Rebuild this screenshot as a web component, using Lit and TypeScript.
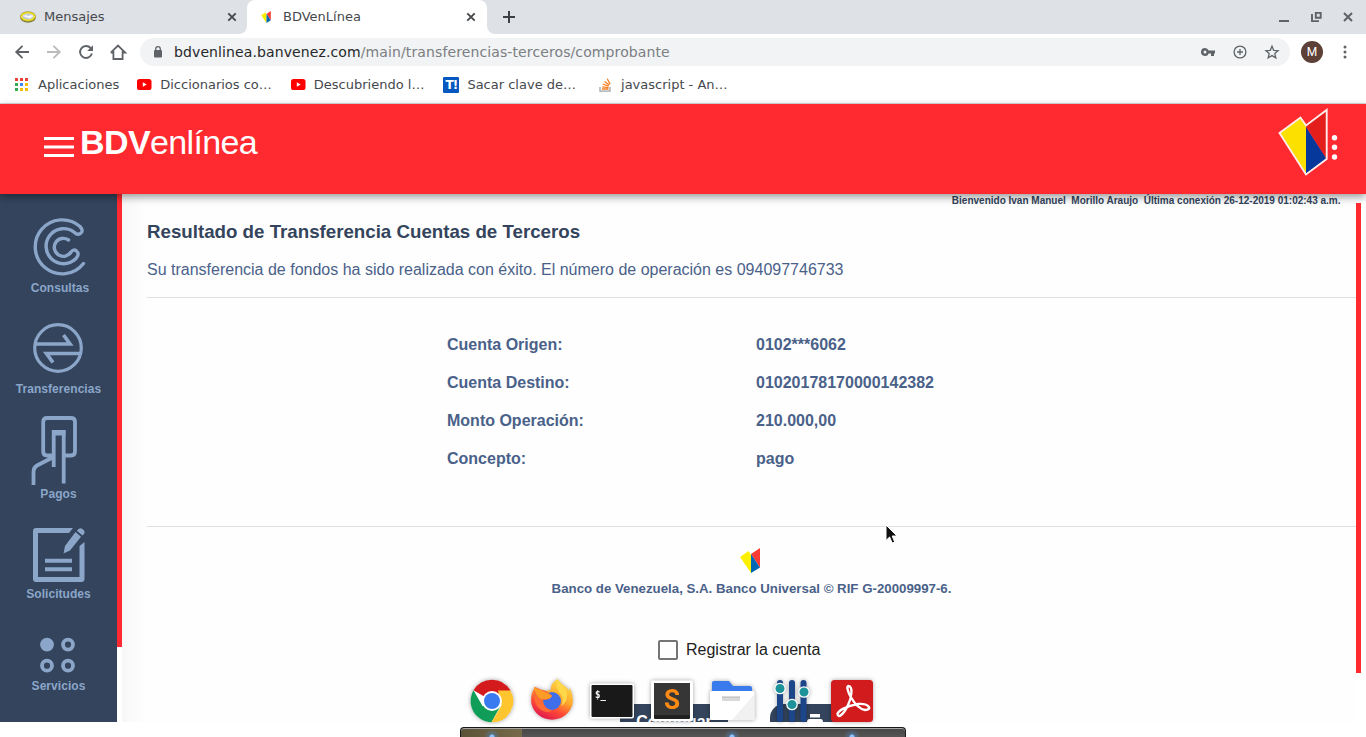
import { LitElement, html, css, svg, SVGTemplateResult } from "lit";
import { customElement } from "lit/decorators.js";

const icon = (cls: string, box: string, body: SVGTemplateResult) => {
  const [, , w, h] = box.split(" ");
  return html`<svg class="ic ${cls}" width=${w} height=${h} viewBox=${box} aria-hidden="true">${body}</svg>`;
};

const cross = svg`<path d="M1.3 1.3L8.7 8.7M8.7 1.3L1.3 8.7" stroke="#45494d" stroke-width="1.900" fill="none"/>`;

const bankMark = svg`
  <path d="M0 9L8.500 3L11 7V25Z" fill="#fff000"/>
  <path d="M11 6L20 0V19.500Z" fill="#ff3b35"/>
  <path d="M11 6L20 19.500L11 25Z" fill="#0067b5"/>`;

const youtube = svg`<rect x="0" y="0" width="14.500" height="11" rx="2.600" fill="#f00"/><path d="M5.800 3.300L9.700 5.500L5.800 7.700Z" fill="#fff"/>`;

@customElement("browser-chrome")
export class BrowserChrome extends LitElement {
  static styles = css`
    :host { display: block; height: 104px; font: 13px/17px "DejaVu Sans", sans-serif; color: #45494d; background: #fff; }
    .ic { display: block; flex: none; overflow: visible; }
    .tabs { display: flex; height: 34px; align-items: stretch; background: #fff; }
    .tab { box-sizing: border-box; display: flex; align-items: center; }
    .idle { width: 247px; padding-left: 20px; background: #dee1e6; border-bottom-right-radius: 8px; }
    .mount { width: 240px; background: linear-gradient(#dee1e6 12px, #fff 12px); }
    .active { width: 240px; height: 34px; padding-left: 14px; background: #fff; border-radius: 8px 8px 0 0; }
    .rest { flex: 1; display: flex; align-items: center; background: #dee1e6; border-bottom-left-radius: 8px; padding-left: 16px; padding-right: 13px; }
    .name { flex: 1; height: 17px; margin-top: -1px; }
    .idle .name { padding-left: 8px; }
    .active .name { padding-left: 12px; }
    .idle .x { margin-right: 10px; }
    .active .x { margin-right: 11px; }
    .min { margin-left: auto; }
    .max { margin-left: 22px; }
    .cls { margin-left: 21px; }
    .bar { display: flex; height: 36px; align-items: center; padding-left: 15px; }
    .fwd { margin-left: 18px; }
    .rel { margin-left: 18px; }
    .home { margin-left: 17px; }
    .omni { margin-left: 14px; display: flex; align-items: center; width: 1150px; height: 28px; border-radius: 14px; background: #f1f3f4; box-sizing: border-box; padding: 0 11px 0 14px; }
    .url { flex: 1; margin-left: 12px; font-size: 14px; color: #7b7e82; letter-spacing: 0.11px; }
    .host { color: #26282b; }
    .key { margin-right: 18px; }
    .zoom { margin-right: 18px; }
    .me { width: 22px; height: 22px; border-radius: 50%; background: #5d4037; color: #fff; font: 12px/22px "Roboto", sans-serif; text-align: center; margin-left: 11px; }
    .more { margin-left: 20px; }
    .marks { display: flex; height: 33px; align-items: center; padding: 0 0 4px 15px; box-sizing: border-box; }
    .apps { margin-right: 10px; }
    .yt { margin: 0 8px 0 18px; }
    .yt2 { margin: 0 8px 0 19px; }
    .t { width: 16px; height: 16px; margin: 0 8px 0 19px; background: #0558c0; border-radius: 1px; color: #fff; font: bold 12px/16px "DejaVu Sans", sans-serif; text-align: center; letter-spacing: -1px; }
    .so { margin: 0 9px 0 23px; }
    .edge { height: 1px; background: #d9dadc; }
  `;

  render() {
    return html`
      <div class="tabs">
        <div class="tab idle">
          ${icon("", "0 0 16 12", svg`<ellipse cx="8" cy="7" rx="7.700" ry="4.700" fill="#7d7b42"/><ellipse cx="8" cy="5.500" rx="7.600" ry="4.800" fill="#f4e51d" stroke="#96913c" stroke-width=".7"/><ellipse cx="8" cy="5.500" rx="5.700" ry="3" fill="#c3cad9"/><path d="M2.500 5L6 4L8 5L11 4L13.500 5L10 7.500L7 6.500Z" fill="#f7f7fa"/>`)}
          <span class="name">Mensajes</span>${icon("x", "0 0 10 10", cross)}
        </div>
        <div class="mount"><div class="tab active">
          ${html`<svg class="ic" width="10" height="12" viewBox="0 0 20 25">${bankMark}</svg>`}
          <span class="name">BDVenLínea</span>${icon("x", "0 0 10 10", cross)}
        </div></div>
        <div class="rest">
          ${icon("", "0 0 12 12", svg`<path d="M6 0V12M0 6H12" stroke="#3c4043" stroke-width="2"/>`)}
          ${icon("min", "0 0 10 10", svg`<path d="M0 9H10" stroke="#5f6368" stroke-width="2"/>`)}
          ${icon("max", "0 0 11 10", svg`<path d="M4.800 .9H9.700V5.800H4.800Z" fill="none" stroke="#5f6368" stroke-width="1.900"/><path d="M1 2V9.100H8" fill="none" stroke="#5f6368" stroke-width="1.900"/>`)}
          ${icon("cls", "0 0 10 10", svg`<path d="M1 1L9 9M9 1L1 9" stroke="#5f6368" stroke-width="2"/>`)}
        </div>
      </div>
      <div class="bar">
        ${icon("", "0 0 14 14", svg`<path d="M14 7H1.500M7.500 .8L1.300 7L7.500 13.200" fill="none" stroke="#5f6368" stroke-width="1.900"/>`)}
        ${icon("fwd", "0 0 14 14", svg`<path d="M0 7H12.500M6.500 .8L12.700 7L6.500 13.200" fill="none" stroke="#babcbe" stroke-width="1.900"/>`)}
        ${icon("rel", "0 0 14 14", svg`<path d="M11.600 3A6 6 0 1 0 12.900 8.500" fill="none" stroke="#5f6368" stroke-width="1.900"/><path d="M14 .2V6H8.200Z" fill="#5f6368"/>`)}
        ${icon("home", "0 0 16 16", svg`<path d="M3.400 7V15H12.600V7M.8 8.600L8 1.500L15.200 8.600H12.600M.8 8.600H3.400" fill="none" stroke="#5f6368" stroke-width="1.800"/>`)}
        <div class="omni">
          ${icon("", "0 0 8 12", svg`<rect y="4" width="8" height="7.500" rx="1" fill="#5f6368"/><path d="M1.700 5V3A2.300 2.300 0 0 1 6.300 3V5" fill="none" stroke="#5f6368" stroke-width="1.300"/>`)}
          <span class="url"><span class="host">bdvenlinea.banvenez.com</span>/main/transferencias-terceros/comprobante</span>
          ${icon("key", "0 0 14 10", svg`<path fill-rule="evenodd" d="M4 1A4 4 0 1 0 7.700 6.500H10V9H13V6.500H14V3.500H7.700A4 4 0 0 0 4 1ZM4 3.500A1.500 1.500 0 1 1 4 6.500A1.500 1.500 0 1 1 4 3.500Z" fill="#5f6368"/>`)}
          ${icon("zoom", "0 0 14 14", svg`<circle cx="7" cy="7" r="5.900" fill="none" stroke="#5f6368" stroke-width="1.300"/><path d="M7 4V10M4 7H10" stroke="#5f6368" stroke-width="1.300"/>`)}
          ${icon("", "0 0 14 14", svg`<path d="M7 1.200L8.700 5.300L13.100 5.700L9.800 8.600L10.800 12.900L7 10.600L3.200 12.900L4.200 8.600L.9 5.700L5.300 5.300Z" fill="none" stroke="#5f6368" stroke-width="1.300"/>`)}
        </div>
        <div class="me">M</div>
        ${icon("more", "0 0 4 14", svg`<g fill="#5f6368"><circle cx="2" cy="2" r="1.500"/><circle cx="2" cy="7" r="1.500"/><circle cx="2" cy="12" r="1.500"/></g>`)}
      </div>
      <div class="marks">
        ${icon("apps", "0 0 13 13", svg`<g fill="#ea4335"><path d="M0 0h3v3H0zM5 0h3v3H5zM10 0h3v3h-3z"/></g><g fill="#34a853"><path d="M0 5h3v3H0zM0 10h3v3H0z"/></g><path fill="#4285f4" d="M5 5h3v3H5z"/><path fill="#fbbc05" d="M10 5h3v3h-3zM5 10h3v3H5zM10 10h3v3h-3z"/>`)}
        <span>Aplicaciones</span>${icon("yt", "0 0 15 11", youtube)}
        <span>Diccionarios co…</span>${icon("yt2", "0 0 15 11", youtube)}
        <span>Descubriendo l…</span><span class="t">T!</span>
        <span>Sacar clave de…</span>
        ${icon("so", "0 0 13 14", svg`<path d="M1 9V13.200H11V9" fill="none" stroke="#a2a5a9" stroke-width="1.300"/><path d="M3 11H9.500M3.200 8.800L9.500 9.600M3.700 6L9.700 8.100M5.500 3.500L10.300 7.100M8.200 .8L11.200 6.100" stroke="#f48024" stroke-width="1.300"/>`)}
        <span>javascript - An…</span>
      </div>
      <div class="edge"></div>`;
  }
}

@customElement("side-menu")
export class SideMenu extends LitElement {
  static styles = css`
    :host { display: block; background: #33445c; color: #8ba6c9; height: 528px; font: bold 12px/14px "Liberation Sans", Arial, sans-serif; letter-spacing: 0.05px; }
    .menu { display: flex; flex-direction: column; align-items: center; padding-top: 24px; }
    .item { display: flex; flex-direction: column; align-items: center; width: 117px; }
    .ic { display: block; overflow: visible; }
    .cons { padding-left: 3px; box-sizing: border-box; }
    .cons .ic { margin-right: 2px; }
    .cons span { margin-top: 6px; }
    .tran { margin-top: 28px; }
    .tran .ic { margin-right: 1px; }
    .tran span { margin-top: 9px; }
    .pago { margin-top: 20px; }
    .pago .ic { margin-right: 9px; }
    .pago span { margin-top: 2px; }
    .soli { margin-top: 27px; }
    .soli span { margin-top: 5px; }
    .serv { margin-top: 36px; }
    .serv .ic { margin-right: 2px; }
    .serv span { margin-top: 6px; }
  `;

  render() {
    const c = "#8ba6c9";
    return html`<div class="menu">
      <div class="item cons">
        ${icon("", "33 218 52 57", svg`<path d="M83.500 263.500A27 27 0 1 1 80 226.500Q84 231 80.500 233.300Q77.500 235.500 74.500 232.500A17.500 17.500 0 1 0 75.500 259Q80.500 254 76 250.500Q73.500 249 71 252A9 9 0 1 1 68.500 240" fill="none" stroke=${c} stroke-width="3.400" stroke-linecap="round"/>`)}
        <span>Consultas</span></div>
      <div class="item tran">
        ${icon("", "33 323 50 50", svg`<circle cx="58" cy="348" r="23.300" fill="none" stroke=${c} stroke-width="3.200"/><path d="M36 344H70L63.500 335M80 353.500H46.500L53 362.500" fill="none" stroke=${c} stroke-width="3.700"/>`)}
        <span>Transferencias</span></div>
      <div class="item pago">
        ${icon("", "31 416 46 69", svg`<path d="M53 455.500H47Q43.200 455.500 43.200 451.500V422Q43.200 418 47.200 418H71Q75 418 75 422V451.500Q75 455.500 71 455.500H65.500M53.700 467V432H63.700V483.500M53.500 457L37 465.500Q33.500 467.500 33.500 472V485" fill="none" stroke=${c} stroke-width="3.800"/><path d="M52 430H65.500V435.500H52Z" fill=${c}/>`)}
        <span>Pagos</span></div>
      <div class="item soli">
        ${icon("", "33 528 52 54", svg`<path d="M73 528L69 533H38V577H79.500V546L84.500 542V579Q84.500 582 81.500 582H36Q33 582 33 579V531Q33 528 36 528Z" fill=${c}/><path d="M45 560.800H72M45 569.200H72" stroke=${c} stroke-width="4"/><path d="M75.500 532L81 536.800L70 550.500L63.500 553.500L65 546Z" fill=${c}/><path d="M77.500 530Q80 527 83 529.500Q86 532 83.500 534.500L82.500 535.500L76.800 530.800Z" fill=${c}/>`)}
        <span>Solicitudes</span></div>
      <div class="item serv">
        ${icon("", "40 637 36 36", svg`<circle cx="47" cy="644.600" r="6.900" fill=${c}/><g fill="none" stroke=${c} stroke-width="3.800"><circle cx="68" cy="644.600" r="5"/><circle cx="47" cy="665.700" r="5"/><circle cx="68" cy="665.700" r="5"/></g>`)}
        <span>Servicios</span></div>
    </div>`;
  }
}

@customElement("task-dock")
export class TaskDock extends LitElement {
  static styles = css`
    :host { display: block; width: 446px; }
    .apps { display: flex; gap: 16px; padding-left: 10px; height: 48px; align-items: flex-start; }
    .ic { display: block; overflow: visible; filter: drop-shadow(0 0 2px rgba(0, 0, 0, 0.35)); }
    .tray { box-sizing: border-box; height: 10px; border: 1px solid #19191a; border-bottom: 0; border-radius: 4px 4px 0 0; box-shadow: inset 0 1px #a6a6a6; background: radial-gradient(circle at 31px 9px, #8bc5ff 0 2px, #4f80b488 3px, transparent 8px), radial-gradient(circle at 271px 9px, #8bc5ff 0 2px, #4f80b488 3px, transparent 8px), radial-gradient(circle at 391px 9px, #8bc5ff 0 2px, #4f80b488 3px, transparent 8px), linear-gradient(90deg, #5a5238 0, #766a49 61px, transparent 61px), linear-gradient(#464646, #555); }
    .mono { font: bold 10px "DejaVu Sans Mono", monospace; }
    .ess { font: bold 28px "Roboto", sans-serif; }
  `;

  render() {
    return html`
      <div class="apps">
        ${icon("", "470 679 44 44", svg`<circle cx="492" cy="701" r="21.300" fill="#fff"/><path d="M492 701L473.500 690.300A21.300 21.300 0 0 1 510.500 690.500Z" fill="#d51a1e"/><path d="M473.500 690.300A21.300 21.300 0 0 0 491.500 722.300L500.500 706L482.500 706Z" fill="#0f9d58"/><path d="M510.500 690.500A21.300 21.300 0 0 1 491.500 722.300L501.500 705.500L498 690.500Z" fill="#ffc52e"/><circle cx="492" cy="701" r="10" fill="#fff"/><circle cx="492" cy="701" r="8" fill="#397af0"/>`)}
        ${icon("", "530 679 44 44", svg`<defs><linearGradient id="fx" x1=".8" y1="0" x2=".3" y2="1"><stop stop-color="#ffe34b"/><stop offset=".45" stop-color="#ffa52b"/><stop offset=".7" stop-color="#ff4d35"/><stop offset="1" stop-color="#df1650"/></linearGradient></defs><path d="M557.500 679Q561 684 566 687L569 690.500L570 688Q574 697 572.500 704A21 20 0 0 1 531.500 704Q530 694 535 687L537 690Q542 689 546 691L551 690Q550 684 557.500 679Z" fill="url(#fx)"/><circle cx="552" cy="701" r="9" fill="#3f6fe8"/><path d="M535 687Q541 690 546 691L552 695.500Q550 700 543 700Q543 708 552 710.500Q548 714 541 710Q534 705 534 695Z" fill="#ff6a35"/><path d="M557.500 680Q555 688 560 693Q565 699 561 706Q568 702 567 693Q566 688 562 685Z" fill="#ffd84a"/><path d="M534 687Q543 691 547 693L552 696Q550 700 541 699Q536 697 534 687Z" fill="#ff9b27"/>`)}
        ${icon("", "590 679 44 44", svg`<rect x="590" y="683.500" width="44" height="35" rx="2" fill="#fff"/><rect x="591.500" y="685" width="41" height="32" rx="1" fill="#191919"/><text class="mono" x="595" y="697.500" textLength="11" lengthAdjust="spacingAndGlyphs" fill="#f5f5f5">$_</text>`)}
        ${icon("", "650 679 44 44", svg`<rect x="651" y="680.500" width="42" height="41" rx="2" fill="#fff"/><rect x="654" y="683" width="36" height="36" rx="1" fill="#202020"/><rect x="654" y="683" width="36" height="32" fill="#363636"/><text class="ess" x="672" y="709" text-anchor="middle" textLength="16" lengthAdjust="spacingAndGlyphs" fill="#ff8b14">S</text>`)}
        ${icon("", "710 679 44 44", svg`<path d="M712 693V683Q712 681 714 681H729L733 686H750Q752 686 752 688V693Z" fill="#397bed"/><rect x="710" y="691" width="44.500" height="29" rx="2" fill="#fff"/><path d="M754.500 694V718Q754.500 720 752.500 720H732Z" fill="#f1f1f1"/><rect x="722" y="697" width="18" height="4" fill="#d9d9d9"/><path d="M722 697H740" stroke="#b5b5b5"/>`)}
        ${icon("", "770 679 44 44", svg`<g stroke="#1c458a" stroke-width="6" stroke-linecap="round"><path d="M780 683V719M792 683V719M803.500 683V719"/></g><g fill="#1d9298" stroke="#fff" stroke-width="1.300"><circle cx="780" cy="688.500" r="5.200"/><circle cx="792" cy="704.500" r="5.200"/><circle cx="804" cy="692" r="5.200"/></g>`)}
        ${icon("", "830 679 44 44", svg`<rect x="831" y="680" width="42" height="42" rx="3.500" fill="#d21b1d"/><path d="M848.500 686C844 686 854 708 865 710C873 710 869 703 858 704C846 706 838 711 837.500 714C838 719 844 714 848 705C852 697 853 686 848.500 686Z" fill="none" stroke="#fff" stroke-width="2.400" stroke-linejoin="round"/>`)}
      </div>
      <div class="tray"></div>`;
  }
}

@customElement("app-root")
export class AppRoot extends LitElement {
  static styles = css`
    :host { display: block; position: relative; width: 1366px; height: 737px; overflow: hidden; background: #fff; font-family: "Liberation Sans", Arial, sans-serif; }
    .ic { display: block; flex: none; overflow: visible; }
    .head { position: relative; z-index: 1; display: flex; box-sizing: border-box; height: 90px; background: #ff2a30; padding: 0 28px 0 44px; box-shadow: 0 3px 8px rgba(0, 0, 0, 0.4); color: #fff; }
    .burger { margin-top: 33px; }
    .brand { margin: 19px 0 0 6px; font-size: 34px; line-height: 39px; letter-spacing: -0.65px; white-space: nowrap; }
    .brand b { letter-spacing: -0.6px; }
    .logo { margin: 4px 0 0 auto; }
    .dots { margin: 31px 0 0 3px; }
    .body { display: grid; grid-template-columns: 117px 5px 1234px 5px; height: 528px; overflow: hidden; }
    .strip { height: 453px; background: #ff2a30; }
    .rail { height: 470px; margin-top: 9px; background: #ff2a30; }
    .main { box-sizing: border-box; height: 528px; overflow: hidden; padding-left: 25px; color: #4a6189; background: linear-gradient(90deg, #f7f7f7, #fcfcfc 14px, #fefefe 28px); }
    .welcome { font: bold 10px/13px "Liberation Sans", Arial, sans-serif; color: #33445c; text-align: right; padding-right: 15.5px; white-space: pre; }
    .title { font-size: 18.72px; line-height: 24px; margin: 13px 0 0; color: #33445c; }
    .msg { font-size: 16px; line-height: 20px; margin: 16px 0 17px; }
    .rule { height: 1px; background: #dedfe0; }
    .data { display: grid; grid-template-columns: 309px auto; grid-auto-rows: 38px; align-items: center; padding: 28px 0 48px 300px; font-size: 16px; font-weight: bold; }
    .foot { display: flex; flex-direction: column; align-items: center; padding-top: 21px; font: bold 13.28px/16px "Liberation Sans", Arial, sans-serif; }
    .foot span { margin-top: 8px; }
    .check { display: flex; align-items: center; gap: 8px; height: 20px; margin: 43px 0 0 511px; color: #212121; font-size: 16px; }
    .box { box-sizing: border-box; width: 20px; height: 20px; border: 2px solid #757575; border-radius: 2px; }
    .actions { display: flex; gap: 42px; margin: 44px 0 0 473px; }
    .btn { box-sizing: border-box; width: 108px; height: 36px; background: #33445c; color: #fff; text-align: center; font: bold 16px/20px "Liberation Sans", Arial, sans-serif; padding-top: 8px; }
    .print { width: 90px; border-radius: 14px; padding: 10px 0 0 37px; }
    .dock { position: absolute; left: 460px; top: 679px; z-index: 3; }
    .cursor { position: absolute; left: 885px; top: 524px; z-index: 4; }
  `;

  private rows = [
    ["Cuenta Origen:", "0102***6062"],
    ["Cuenta Destino:", "01020178170000142382"],
    ["Monto Operación:", "210.000,00"],
    ["Concepto:", "pago"],
  ];

  render() {
    return html`
      <browser-chrome></browser-chrome>
      <div class="head">
        ${icon("burger", "0 0 30 20", svg`<path d="M0 1.500H30M0 10H30M0 18.500H30" stroke="#fff" stroke-width="3.200"/>`)}
        <div class="brand"><b>BDV</b>enlínea</div>
        ${icon("logo", "1278 108 50 68", svg`<path d="M1279.500 133L1300.500 117L1306 125V174Z" fill="#fbe000"/><path d="M1306 125.500L1327 110V159Z" fill="#e31e1b"/><path d="M1306 127L1326.500 159L1306 174Z" fill="#06389c"/><path d="M1279.500 133L1300.500 117.500L1306 125.500L1326.700 110V159L1306 174.500Z" fill="none" stroke="#ffeceb" stroke-width="1.900"/>`)}
        ${icon("dots", "0 0 7 25", svg`<g fill="#fff"><circle cx="3.500" cy="2.700" r="2.700"/><circle cx="3.500" cy="12.300" r="2.700"/><circle cx="3.500" cy="22" r="2.700"/></g>`)}
      </div>
      <div class="body">
        <side-menu></side-menu>
        <div class="strip"></div>
        <div class="main">
          <div class="welcome">Bienvenido Ivan Manuel  Morillo Araujo  Última conexión 26-12-2019 01:02:43 a.m.</div>
          <h3 class="title">Resultado de Transferencia Cuentas de Terceros</h3>
          <p class="msg">Su transferencia de fondos ha sido realizada con éxito. El número de operación es 094097746733</p>
          <div class="rule"></div>
          <div class="data">${this.rows.map(([k, v]) => html`<span>${k}</span><span>${v}</span>`)}</div>
          <div class="rule"></div>
          <div class="foot">${icon("", "0 0 23 25", bankMark)}<span>Banco de Venezuela, S.A. Banco Universal © RIF G-20009997-6.</span></div>
          <label class="check"><span class="box"></span>Registrar la cuenta</label>
          <div class="actions">
            <div class="btn">Continuar</div>
            <div class="btn print">${icon("", "0 0 16 15", svg`<path d="M3 0H13V3.500H3ZM2.500 5H13.500Q16 5 16 8V11H13V15H3V11H0V8Q0 5 2.500 5Z" fill="#fff"/>`)}</div>
          </div>
        </div>
        <div class="rail"></div>
      </div>
      <div class="dock"><task-dock></task-dock></div>
      ${icon("cursor", "0 0 14 20", svg`<path d="M1 1V16.500L4.600 13L7.200 19L9.700 18L7.200 12H12Z" fill="#111" stroke="#fff" stroke-width="1"/>`)}
    `;
  }
}
